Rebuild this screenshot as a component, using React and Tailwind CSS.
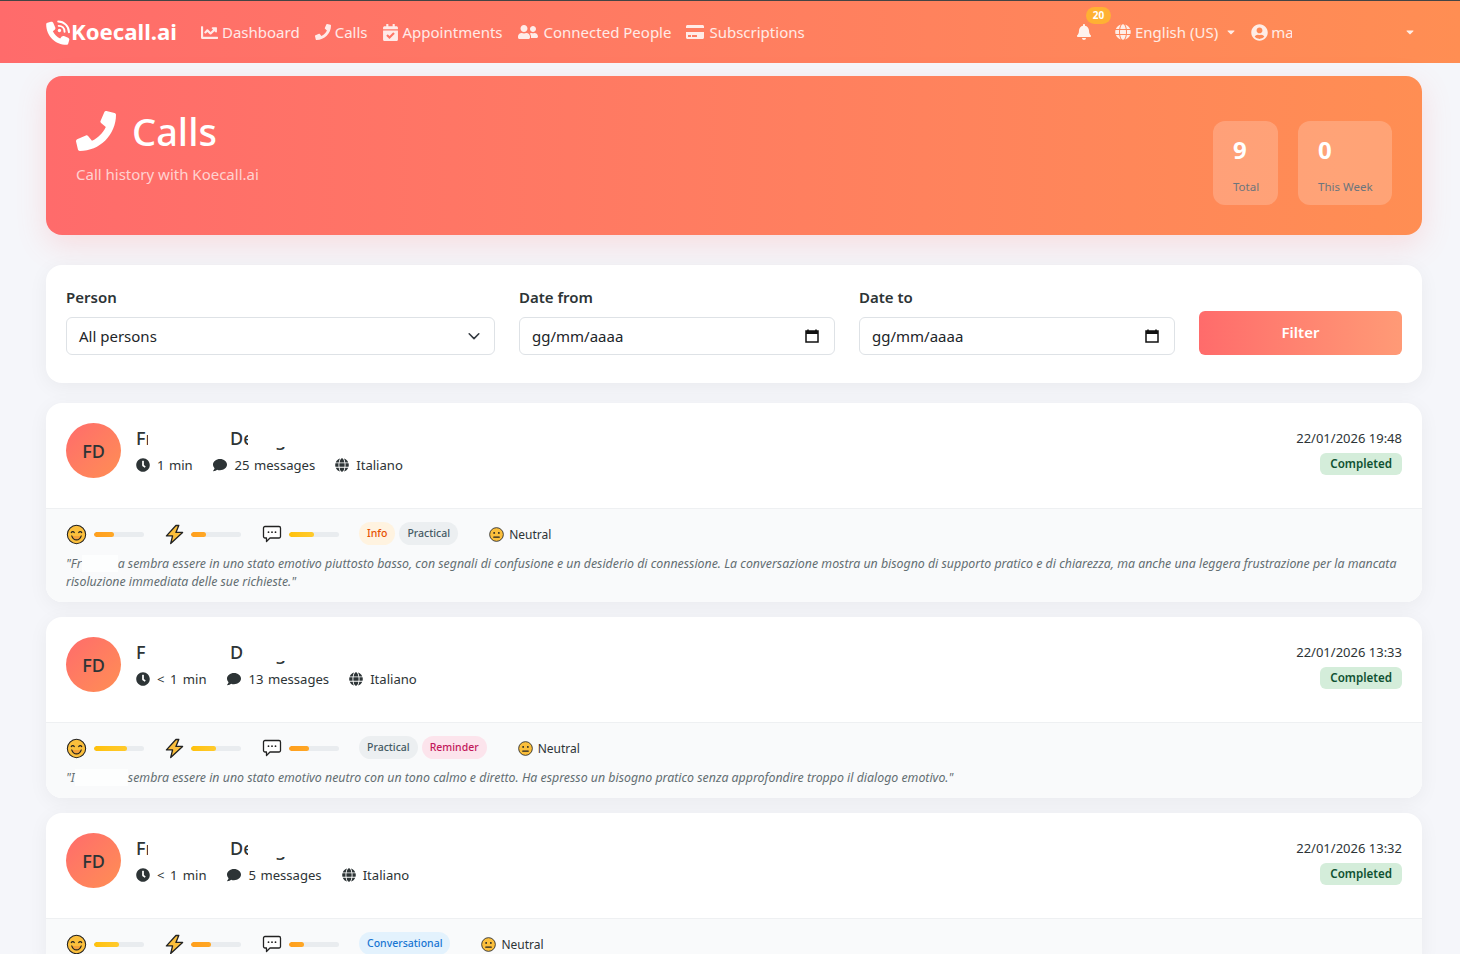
import { FaBell, FaCalendarCheck, FaCaretDown, FaChartLine, FaClock, FaComment, FaCreditCard, FaGlobe, FaPhone, FaUserCircle, FaUserFriends } from "react-icons/fa";

const navLinks = [
  { label: "Dashboard", icon: FaChartLine, size: "text-[17px]", gap: "gap-[4px]" },
  { label: "Calls", icon: FaPhone, size: "text-[16px]", gap: "gap-[4px]" },
  { label: "Appointments", icon: FaCalendarCheck, size: "text-[17px]", gap: "gap-[3px]" },
  { label: "Connected People", icon: FaUserFriends, size: "text-[20px]", gap: "gap-[6px]" },
  { label: "Subscriptions", icon: FaCreditCard, size: "text-[18px]", gap: "gap-[5px]" },
];

const tagStyles = {
  Info: "bg-[#fff3e0] text-[#e65100]",
  Practical: "bg-[#eceff1] text-[#455a64]",
  Reminder: "bg-[#fce4ec] text-[#c2185b]",
  Conversational: "bg-[#e3f2fd] text-[#1976d2]",
};

const calls = [
  {
    date: "22/01/2026 19:48",
    duration: "1 min",
    messages: "25 messages",
    firstW: "w-[12px]",
    lastW: "w-[18px]",
    bars: [[40, "o"], [30, "o"], [50, "y"]],
    tags: ["Info", "Practical"],
    summary: (
      <>
        "Fr<span className="inline-block w-[36px] h-[17px] -mb-1 bg-white/70"></span>a sembra essere in uno stato emotivo piuttosto basso, con segnali di confusione e un desiderio di connessione. La conversazione mostra un bisogno di supporto pratico e di chiarezza, ma anche una leggera frustrazione per la mancata risoluzione immediata delle sue richieste."
      </>
    ),
  },
  {
    date: "22/01/2026 13:33",
    duration: "< 1 min",
    messages: "13 messages",
    firstW: "w-[10px]",
    lastW: "w-[14px]",
    bars: [[65, "y"], [50, "y"], [40, "o"]],
    tags: ["Practical", "Reminder"],
    summary: (
      <>
        "I<span className="inline-block w-[53px] h-[17px] -mb-1 bg-white/70"></span>sembra essere in uno stato emotivo neutro con un tono calmo e diretto. Ha espresso un bisogno pratico senza approfondire troppo il dialogo emotivo."
      </>
    ),
  },
  {
    date: "22/01/2026 13:32",
    duration: "< 1 min",
    messages: "5 messages",
    firstW: "w-[12px]",
    lastW: "w-[18px]",
    bars: [[50, "y"], [40, "o"], [30, "o"]],
    tags: ["Conversational"],
    summary: null,
  },
];

function LogoIcon() {
  return (
    <svg viewBox="0 0 512 512" className="w-[25px] h-[25px] fill-white shrink-0">
      <path d="M150 60c-8-20-30-30-50-24L30 56C14 60 4 74 4 90c0 230 188 418 418 418 16 0 30-10 34-26l20-70c6-20-4-42-24-50l-84-34c-16-6-34-2-46 12l-32 40c-66-32-118-84-150-150l38-32c14-12 18-30 12-46L150 60z" />
      <g className="fill-none stroke-white" strokeWidth="40" strokeLinecap="round">
        <path d="M250 30c120 0 220 100 220 220" />
        <path d="M260 120c70 0 120 50 120 120" />
      </g>
      <circle cx="275" cy="215" r="34" />
    </svg>
  );
}

function SmileEmoji() {
  return (
    <svg viewBox="0 0 22 22" className="w-[21px] h-[21px]">
      <circle cx="11" cy="11" r="9.6" fill="#fbbf3c" stroke="#222" strokeWidth="1.1" />
      <path d="M5.5 9c.8-1.4 2.4-1.4 3.2 0M13.3 9c.8-1.4 2.4-1.4 3.2 0" fill="none" stroke="#222" strokeWidth="1.2" strokeLinecap="round" />
      <path d="M6 12.5c1 3 3 4.2 5 4.2s4-1.2 5-4.2" fill="#f4a13a" stroke="#222" strokeWidth="1.2" strokeLinecap="round" />
    </svg>
  );
}

function BoltEmoji() {
  return (
    <svg viewBox="0 0 20 22" className="w-[19px] h-[21px]">
      <path d="M11.500 1.500 1.500 12.500h6.500L6 20.500 18.500 8.800h-7L14.500 1.500z" fill="#fbbf3c" stroke="#222" strokeWidth="1.400" strokeLinejoin="round" />
    </svg>
  );
}

function BubbleEmoji() {
  return (
    <svg viewBox="0 0 20 20" className="w-[20px] h-[20px]">
      <path d="M3 2.500h14a1.500 1.500 0 0 1 1.500 1.500v8.500a1.500 1.500 0 0 1-1.500 1.500H8l-3.500 3.500V14H3a1.500 1.500 0 0 1-1.500-1.500V4A1.500 1.500 0 0 1 3 2.500z" fill="#fff" stroke="#222" strokeWidth="1.300" strokeLinejoin="round" />
      <circle cx="6.500" cy="8.200" r=".9" fill="#222" />
      <circle cx="10" cy="8.200" r=".9" fill="#222" />
      <circle cx="13.500" cy="8.200" r=".9" fill="#222" />
    </svg>
  );
}

function NeutralEmoji() {
  return (
    <svg viewBox="0 0 16 16" className="w-[15px] h-[15px] shrink-0">
      <circle cx="8" cy="8" r="7.300" fill="#fbbf3c" stroke="#222" strokeWidth=".9" />
      <circle cx="5.500" cy="6.300" r="1" fill="#222" />
      <circle cx="10.500" cy="6.300" r="1" fill="#222" />
      <path d="M5 10.800h6" stroke="#222" strokeWidth="1.100" strokeLinecap="round" />
    </svg>
  );
}

function CalendarGlyph() {
  return (
    <svg viewBox="0 0 16 16" className="w-[16px] h-[16px] mr-[2px]">
      <path d="M4 1.500v2M12 1.500v2" stroke="#111" strokeWidth="1.600" />
      <rect x="2" y="3" width="12" height="11" fill="none" stroke="#111" strokeWidth="1.500" />
      <rect x="2" y="3" width="12" height="3" fill="#111" />
    </svg>
  );
}

function Bar({ value, tone }) {
  return (
    <div className="w-[50px] h-[5px] rounded-full bg-[#e9ecef] overflow-hidden">
      <div
        className={tone === "y" ? "h-full rounded-full bg-gradient-to-r from-[#ffc107] to-[#ffca2c]" : "h-full rounded-full bg-gradient-to-r from-[#ff9f1c] to-[#ffa726]"}
        style={{ width: `${value}%` }}
      ></div>
    </div>
  );
}

function Field({ label, value, icon, className }) {
  return (
    <div className={className}>
      <div className="text-[15px] font-semibold text-[#2d3436] leading-[22px] mb-[9px]">{label}</div>
      <div className="h-[38px] rounded-[6px] border border-[#dee2e6] bg-white px-3 flex items-center justify-between text-[15px] text-[#212529]">
        <span>{value}</span>
        {icon}
      </div>
    </div>
  );
}

function CallCard({ call }) {
  const emojis = [
    [SmileEmoji, "w-[21px]"],
    [BoltEmoji, "w-[19px]"],
    [BubbleEmoji, "w-[20px]"],
  ];
  return (
    <div className="bg-white rounded-[16px] shadow-[0_4px_20px_rgba(0,0,0,0.05)] overflow-hidden mb-[15px]">
      <div className="h-[106px] px-5 pt-5 flex justify-between border-b border-[#eef0f2]">
        <div className="flex gap-[15px]">
          <div className="w-[55px] h-[55px] pt-px rounded-full bg-gradient-to-br from-[#ff6b6b] to-[#ff8e53] flex items-center justify-center text-[18px] font-medium text-[#2d3436]">FD</div>
          <div>
            <div className="h-[30px] flex text-[18px] font-medium text-[#2d3436] leading-[30px]">
              <div className="w-[94px]">
                <div className={`${call.firstW} overflow-hidden`}>Fr</div>
              </div>
              <div className="w-[45px]">
                <div className={`${call.lastW} overflow-hidden`}>De</div>
              </div>
              <div className="w-[10px] h-[4px] overflow-hidden mt-[24px]">
                <div className="-mt-[23px]">g</div>
              </div>
            </div>
            <div className="flex items-center gap-5 text-[13.1px] text-[#2d3436] leading-[24px] [word-spacing:1px]">
              <span className={`flex items-center gap-[7px] ${call.duration.startsWith("<") ? "[word-spacing:2px]" : ""}`}><FaClock className="text-[14px]" />{call.duration}</span>
              <span className="flex items-center gap-[8px]"><FaComment className="text-[14px]" />{call.messages}</span>
              <span className="flex items-center gap-[7px]"><FaGlobe className="text-[14px]" />Italiano</span>
            </div>
          </div>
        </div>
        <div className="flex flex-col items-end">
          <div className="text-[13px] text-[#2d3436] leading-[30px]">{call.date}</div>
          <div className="px-[10px] h-[22px] rounded-[6px] bg-[#d4edda] text-[#0f5132] text-[11.6px] font-semibold flex items-center">Completed</div>
        </div>
      </div>
      <div className="bg-[#f9fafb] px-5 pt-[13px] pb-[11px]">
        <div className="flex items-center gap-[21px] h-[24px]">
          {call.bars.map(([value, tone], i) => {
            const [Emoji, w] = emojis[i];
            return (
              <div key={i} className="flex items-center gap-[7px]">
                <div className={`${w} flex justify-center`}><Emoji /></div>
                <Bar value={value} tone={tone} />
              </div>
            );
          })}
          <div className="flex gap-1 -mt-[1px] -ml-[1px]">
            {call.tags.map((tag) => (
              <span key={tag} className={`px-2 h-[23px] rounded-full text-[10.5px] font-medium flex items-center ${tagStyles[tag]}`}>{tag}</span>
            ))}
          </div>
          <div className="flex items-center gap-[5px] text-[12px] text-[#2d3436] ml-[10px] mt-px">
            <NeutralEmoji />Neutral
          </div>
        </div>
        {call.summary && <p className="mt-[9px] text-[12.35px] italic leading-[18px] text-[#636e72]">{call.summary}</p>}
      </div>
    </div>
  );
}

export default function App() {
  return (
    <div className="h-[954px] overflow-hidden bg-[#f5f6fa] font-['Noto_Sans',sans-serif]">
      <nav className="h-[63px] border-t border-[#444] bg-gradient-to-r from-[#ff6b6b] to-[#ff8e53] flex items-center pl-[46px] text-white">
        <div className="flex items-center w-[155px]">
          <LogoIcon />
          <span className="text-[22.2px] font-bold leading-none mt-px">Koecall.ai</span>
        </div>
        <div className="flex items-center gap-[15px] text-[15px] text-white/85">
          {navLinks.map(({ label, icon: Icon, size, gap }) => (
            <span key={label} className={`flex items-center ${gap}`}>
              <Icon className={size} />
              {label}
            </span>
          ))}
        </div>
        <div className="ml-auto w-[384px] flex items-center text-[15px] text-white/85 relative">
          <FaBell className="text-[16px] text-white/90" />
          <span className="absolute -top-[14px] left-[10px] w-[25px] h-[17px] rounded-full bg-[#ffb133] text-white text-[10px] font-bold flex items-center justify-center">20</span>
          <FaGlobe className="text-[16px] ml-[23px] mr-[4px]" />
          <span>English (US)</span>
          <FaCaretDown className="text-[12px] ml-[7px] mr-[14px]" />
          <FaUserCircle className="text-[17px] mr-[3px]" />
          <span className="w-[21px] overflow-hidden">ma</span>
          <FaCaretDown className="text-[12px] ml-[112px]" />
        </div>
      </nav>

      <main className="mx-[46px] w-[1376px]">
        <section className="mt-[13px] h-[159px] rounded-[16px] bg-gradient-to-r from-[#ff6b6b] to-[#ff8e53] shadow-[0_10px_30px_rgba(255,107,107,0.18)] px-[30px] pt-[30px] flex items-start justify-between text-white">
          <div>
            <h1 className="flex items-center gap-[16px] text-[38px] font-medium leading-[50px]">
              <FaPhone className="text-[40px]" />
              Calls
            </h1>
            <p className="text-[15px] text-white/70 mt-[7px]">Call history with Koecall.ai</p>
          </div>
          <div className="flex gap-5 mt-[15px]">
            <div className="w-[65px] h-[84px] rounded-[12px] bg-white/20 pl-[20px] pt-[12px]">
              <div className="text-[24px] font-bold leading-[34px]">9</div>
              <div className="text-[11.5px] text-[#6c757d] mt-[11px]">Total</div>
            </div>
            <div className="w-[94px] h-[84px] rounded-[12px] bg-white/20 pl-[20px] pt-[12px]">
              <div className="text-[24px] font-bold leading-[34px]">0</div>
              <div className="text-[11.5px] text-[#6c757d] mt-[11px]">This Week</div>
            </div>
          </div>
        </section>

        <section className="mt-[30px] mb-5 h-[118px] rounded-[16px] bg-white shadow-[0_4px_20px_rgba(0,0,0,0.05)] px-5 pt-[21px] flex gap-[24px]">
          <Field
            label="Person"
            value="All persons"
            className="w-[429px]"
            icon={<svg viewBox="0 0 16 16" className="w-[14px] h-[14px] mr-[1px]"><path d="M2.500 5.500 8 11l5.500-5.500" fill="none" stroke="#343a40" strokeWidth="1.800" strokeLinecap="round" strokeLinejoin="round" /></svg>}
          />
          <Field label="Date from" value="gg/mm/aaaa" className="w-[316px]" icon={<CalendarGlyph />} />
          <Field label="Date to" value="gg/mm/aaaa" className="w-[316px]" icon={<CalendarGlyph />} />
          <div className="flex-1 pt-[25px]">
            <button className="w-full h-[44px] pb-[2px] rounded-[6px] bg-gradient-to-r from-[#ff6b6b] to-[#ff9a76] text-white text-[15px] font-semibold">Filter</button>
          </div>
        </section>

        {calls.map((call) => (
          <CallCard key={call.date} call={call} />
        ))}
      </main>
    </div>
  );
}
